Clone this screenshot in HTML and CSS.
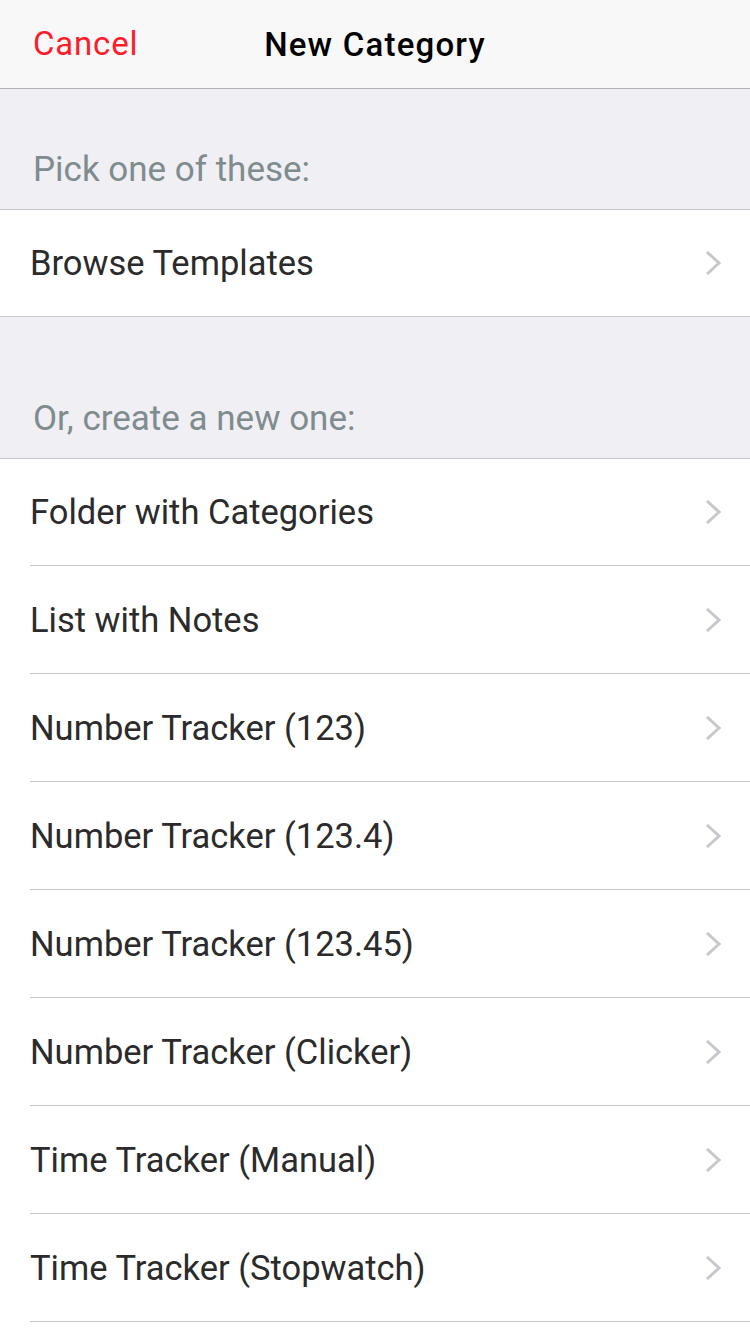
FILE: index.html
```html
<!DOCTYPE html>
<html>
<head>
<meta charset="utf-8">
<link rel="stylesheet" href="styles.css">
</head>
<body>
<header class="nav">
  <span class="nav-cancel">Cancel</span>
  <span class="nav-title">New Category</span>
</header>
<div class="section-header first">Pick one of these:</div>
<ul class="group single">
  <li class="row"><span class="label">Browse Templates</span><svg class="chev" viewBox="0 0 16 26"><path d="M2 2 L14 13 L2 24" /></svg></li>
</ul>
<div class="section-header second">Or, create a new one:</div>
<ul class="group last">
  <li class="row"><span class="label">Folder with Categories</span><svg class="chev" viewBox="0 0 16 26"><path d="M2 2 L14 13 L2 24" /></svg></li>
  <li class="row"><span class="label">List with Notes</span><svg class="chev" viewBox="0 0 16 26"><path d="M2 2 L14 13 L2 24" /></svg></li>
  <li class="row"><span class="label">Number Tracker (123)</span><svg class="chev" viewBox="0 0 16 26"><path d="M2 2 L14 13 L2 24" /></svg></li>
  <li class="row"><span class="label">Number Tracker (123.4)</span><svg class="chev" viewBox="0 0 16 26"><path d="M2 2 L14 13 L2 24" /></svg></li>
  <li class="row"><span class="label">Number Tracker (123.45)</span><svg class="chev" viewBox="0 0 16 26"><path d="M2 2 L14 13 L2 24" /></svg></li>
  <li class="row"><span class="label">Number Tracker (Clicker)</span><svg class="chev" viewBox="0 0 16 26"><path d="M2 2 L14 13 L2 24" /></svg></li>
  <li class="row"><span class="label">Time Tracker (Manual)</span><svg class="chev" viewBox="0 0 16 26"><path d="M2 2 L14 13 L2 24" /></svg></li>
  <li class="row"><span class="label">Time Tracker (Stopwatch)</span><svg class="chev" viewBox="0 0 16 26"><path d="M2 2 L14 13 L2 24" /></svg></li>
</ul>
</body>
</html>
```
FILE: styles.css
```css
* { box-sizing: border-box; }
html, body { margin: 0; padding: 0; }
body {
  width: 750px;
  height: 1334px;
  overflow: hidden;
  background: #efeff4;
  font-family: Roboto, "Liberation Sans", sans-serif;
  display: flex;
  flex-direction: column;
}
.nav {
  flex: none;
  height: 89px;
  background: #f8f8f8;
  border-bottom: 1px solid #b2b2b2;
  display: flex;
  align-items: center;
  justify-content: center;
  position: relative;
}
.nav-cancel {
  position: absolute;
  left: 33px;
  top: 24px;
  color: #fc1d2b;
  font-size: 33px;
  letter-spacing: 0.8px;
  line-height: 40px;
}
.nav-title {
  color: #000;
  font-size: 33px;
  letter-spacing: 1.2px;
  line-height: 40px;
  font-weight: 500;
  margin-top: 2px;
}
.section-header {
  flex: none;
  color: #7f8c8d;
  font-size: 35px;
  padding-left: 33px;
  display: flex;
  align-items: flex-end;
  border-bottom: 1px solid #c8c7cc;
}
.section-header.first { height: 121px; padding-bottom: 19px; }
.section-header.second { height: 142px; padding-bottom: 19px; }
.group {
  flex: none;
  list-style: none;
  margin: 0;
  padding: 0 0 0 30px;
  background: #fff;
}
.group.single { border-bottom: 1px solid #c8c7cc; }
.group.last { flex: 1; }
.row {
  height: 108px;
  display: flex;
  align-items: center;
  justify-content: space-between;
  padding-right: 29px;
  border-bottom: 1px solid #c8c7cc;
}
.group.last .row:first-child { height: 107px; }
.group.single .row { height: 106px; border-bottom: none; }
.label {
  color: #2b2b2b;
  font-size: 34.5px;
}
.chev {
  width: 16px;
  height: 26px;
}
.chev path {
  fill: none;
  stroke: #c7c7cc;
  stroke-width: 3;
}
```
